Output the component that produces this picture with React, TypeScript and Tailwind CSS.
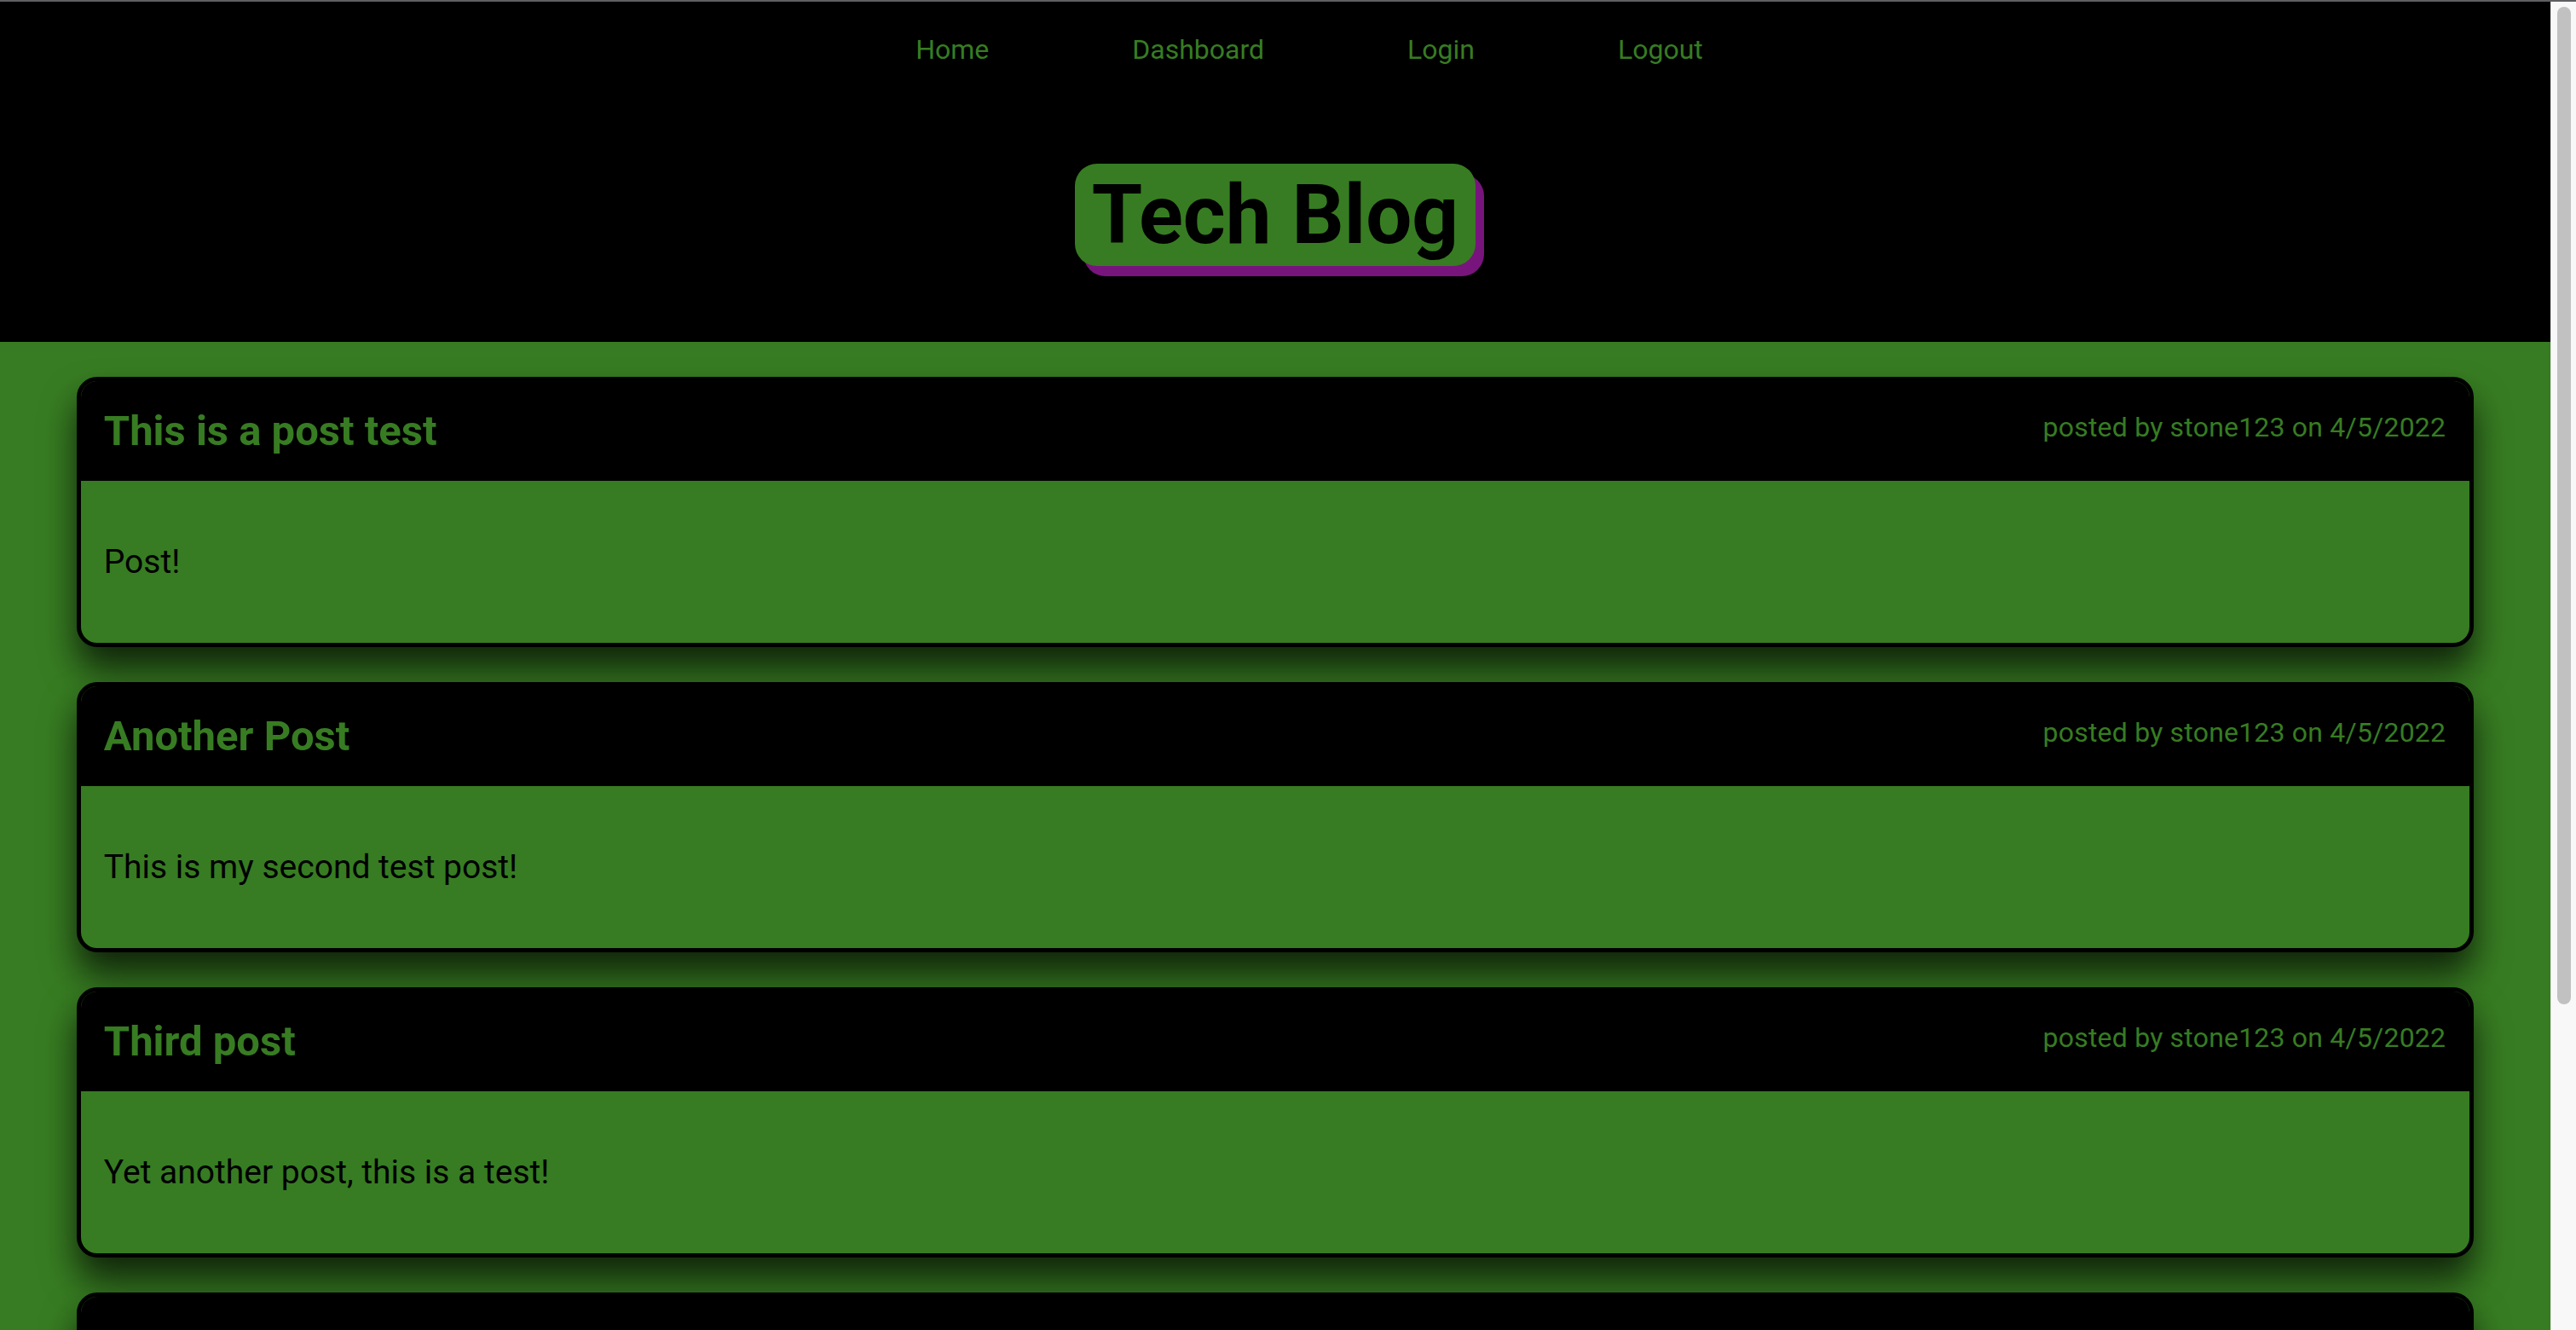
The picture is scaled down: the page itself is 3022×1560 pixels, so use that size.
const posts = [
  { title: "This is a post test", body: "Post!", meta: "posted by stone123 on 4/5/2022" },
  { title: "Another Post", body: "This is my second test post!", meta: "posted by stone123 on 4/5/2022" },
  { title: "Third post", body: "Yet another post, this is a test!", meta: "posted by stone123 on 4/5/2022" },
  // only the top of the fourth card shows in the viewport
  { title: "", body: "", meta: "" },
];

function PostCard({ title, body, meta }: { title: string; body: string; meta: string }) {
  return (
    <div className="w-[94%] mx-auto shrink-0 rounded-[24px] border-[5px] border-black bg-[#377c22] overflow-hidden shadow-[0_26px_40px_rgba(0,0,0,0.7)]">
      {/* header */}
      <div className="h-[117px] bg-black flex items-center justify-between pl-[27px] pr-[28px]">
        <h2 className="text-[49px] font-bold text-[#377c22] leading-none">{title}</h2>
        <p className="text-[32px] text-[#377c22] tracking-[0.2px] leading-none -mt-[10px]">{meta}</p>
      </div>
      {/* body */}
      <div className="h-[190px] flex items-center pl-[27px]">
        <p className="text-[39px] text-black">{body}</p>
      </div>
    </div>
  );
}

export default function App() {
  return (
    <div className="h-[1560px] w-full flex overflow-hidden font-['Roboto','Liberation_Sans',sans-serif] border-t-2 border-[#5f5f63]">
      <div className="flex-1 flex flex-col overflow-hidden">
        {/* Header */}
        <header className="h-[399px] shrink-0 bg-black flex flex-col items-center">
          <nav className="w-full pt-[32px]">
            <ul className="flex justify-center pl-[80px]">
              {["Home", "Dashboard", "Login", "Logout"].map((item) => (
                <li key={item} className="mx-[84px]">
                  <a className="text-[32px] leading-[48px] text-[#377c22]">{item}</a>
                </li>
              ))}
            </ul>
          </nav>
          <h1 className="mt-[110px] px-[20px] h-[120px] flex items-center rounded-[26px] bg-[#377c22] text-black text-[96px] font-bold leading-none shadow-[10px_12px_0_#78157c]">
            Tech Blog
          </h1>
        </header>

        {/* Posts */}
        <main className="flex-1 bg-[#377c22] flex flex-col gap-[41px] pt-[41px]">
          {posts.map((post, i) => (
            <PostCard key={i} title={post.title} body={post.body} meta={post.meta} />
          ))}
        </main>
      </div>

      {/* scrollbar */}
      <div className="w-[30px] shrink-0 bg-[#f8f8f8] border-l border-[#e6e6e6] pt-[6px] flex justify-center">
        <div className="w-[16px] h-[1170px] rounded-full bg-[#c1c1c1]" />
      </div>
    </div>
  );
}
